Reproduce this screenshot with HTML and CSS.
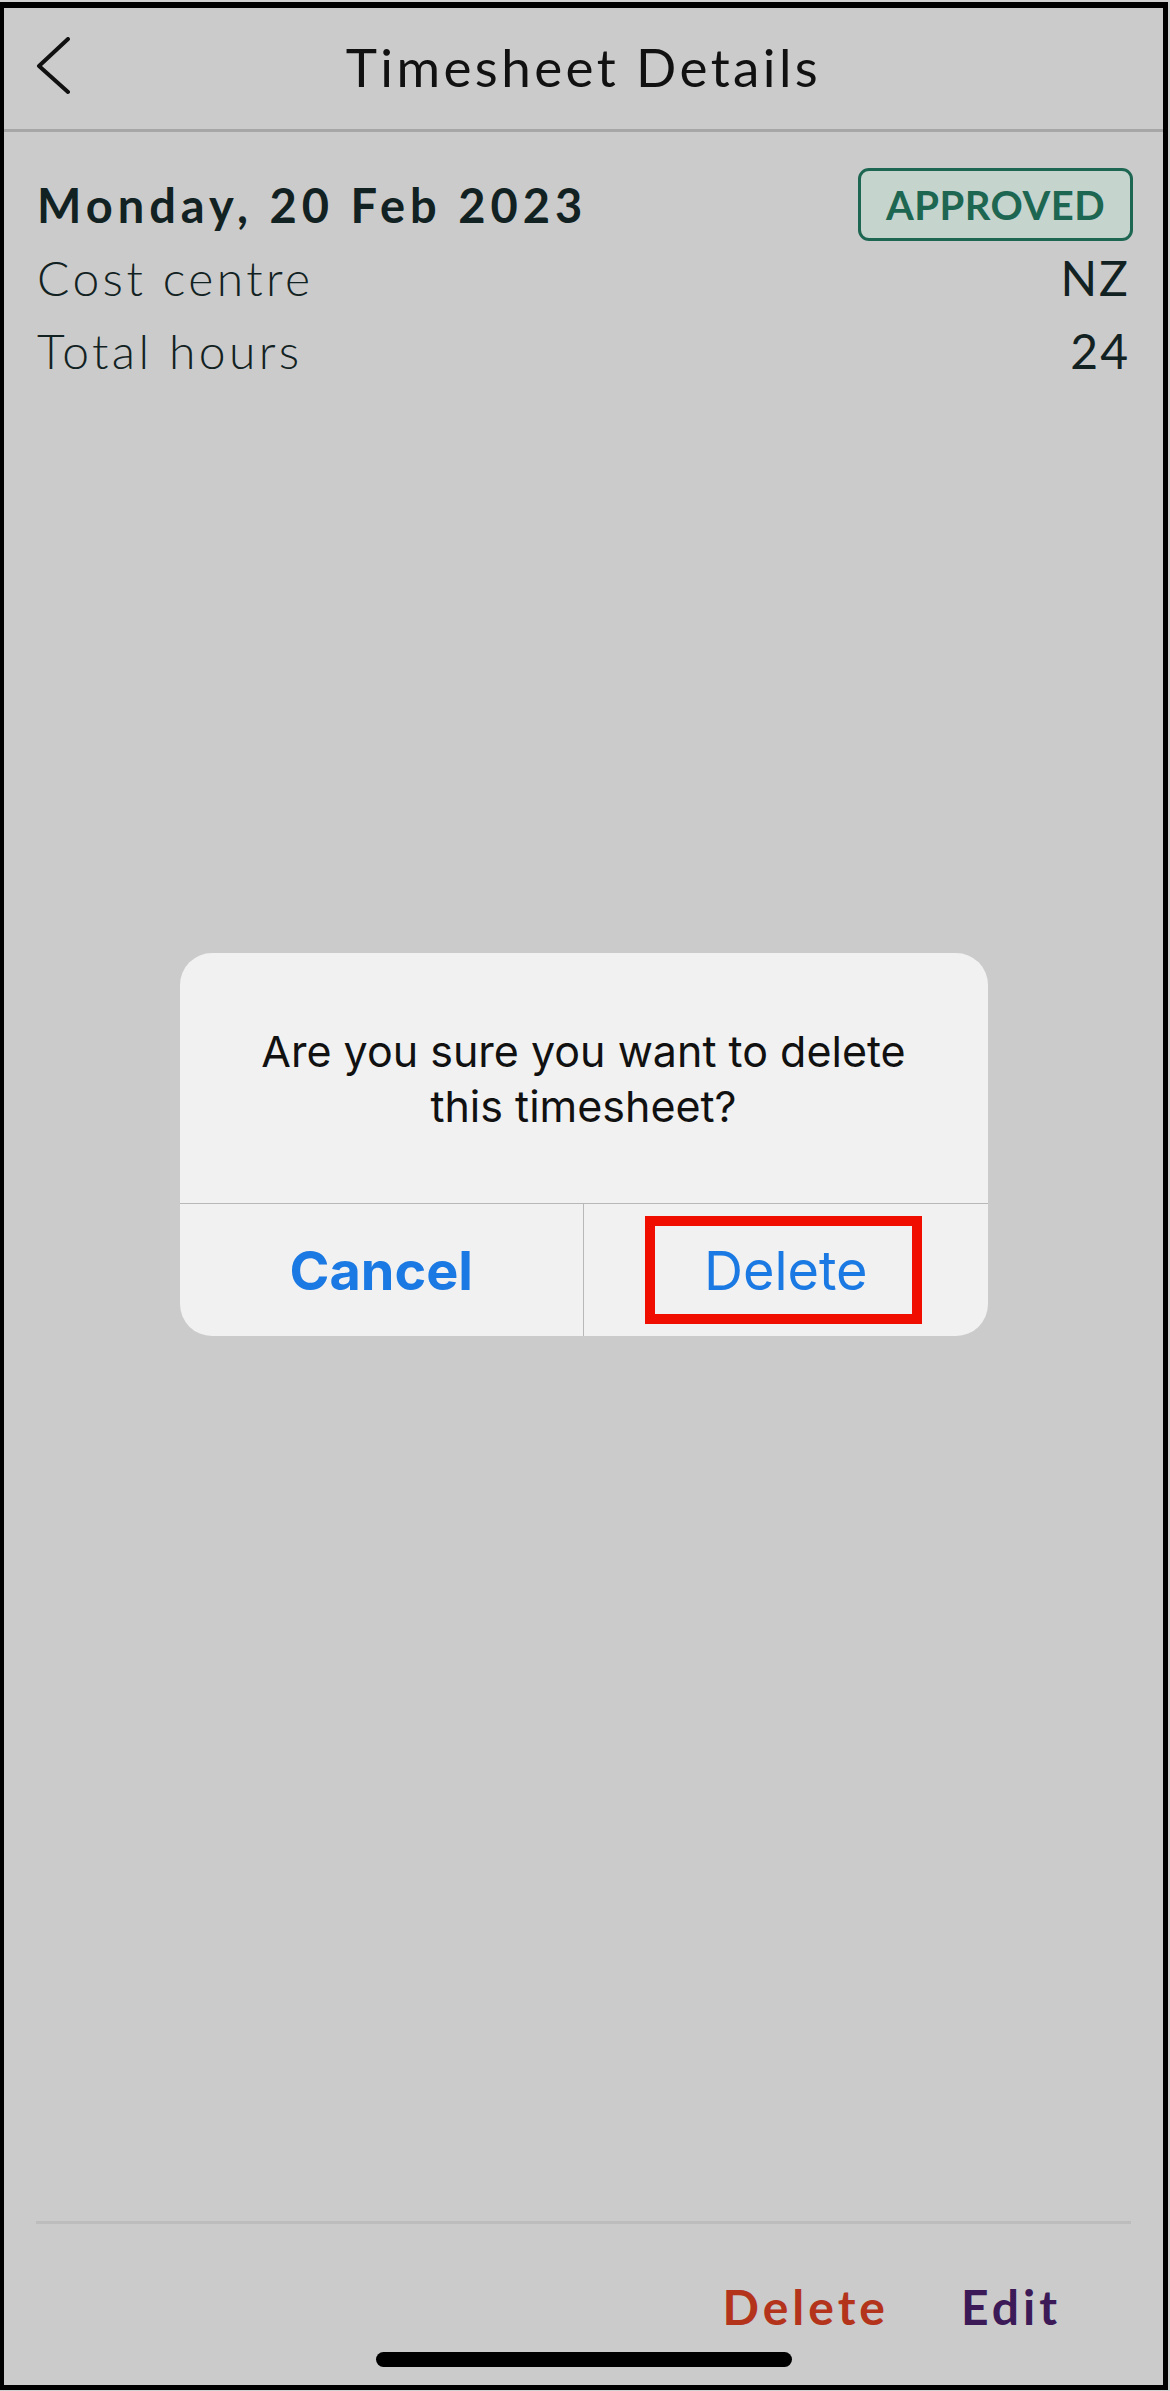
FILE: index.html
```html
<!DOCTYPE html>
<html lang="en">

<head>
    <meta charset="UTF-8">
    <meta name="viewport" content="width=device-width, initial-scale=1.0">
    <title>Timesheet Details</title>
    <link rel="stylesheet" href="styles.css">
</head>

<body>
    <div class="phone">
        <div class="header">
            <button class="back-btn" aria-label="Back">
                <svg width="40" height="60" viewBox="0 0 40 60">
                    <polyline points="34,2 5,29 34,55" fill="none" stroke="#111" stroke-width="4" stroke-linecap="round" stroke-linejoin="round" />
                </svg>
            </button>
            <h1>Timesheet Details</h1>
        </div>

        <div class="summary">
            <div class="row">
                <span class="date">Monday, 20 Feb 2023</span>
                <span class="badge">APPROVED</span>
            </div>
            <div class="row">
                <span class="label">Cost centre</span>
                <span class="value">NZ</span>
            </div>
            <div class="row">
                <span class="label">Total hours</span>
                <span class="value">24</span>
            </div>
        </div>

        <div class="spacer"></div>

        <div class="footer">
            <div class="actions">
                <button class="action delete">Delete</button>
                <button class="action edit">Edit</button>
            </div>
            <div class="home-bar"></div>
        </div>

        <!-- confirm dialog sits over the dimmed page -->
        <div class="overlay">
            <div class="dialog">
                <p class="dialog-msg">Are you sure you want to delete this timesheet?</p>
                <div class="dialog-buttons">
                    <button class="dialog-btn cancel">Cancel</button>
                    <button class="dialog-btn confirm">Delete</button>
                </div>
                <div class="highlight"></div>
            </div>
        </div>
    </div>
</body>

</html>
```

FILE: styles.css
```css
body {
    font-family: Lato, 'Noto Sans', sans-serif;
    margin: 0;
    background-color: #d0d0d0;
    color: #122222;
}

button {
    font-family: inherit;
    background: none;
    border: none;
    padding: 0;
    cursor: pointer;
}

.phone {
    position: relative;
    display: flex;
    flex-direction: column;
    height: 2388px;
    box-sizing: border-box;
    margin: 2px 2px 1px 0;
    border-style: solid;
    border-color: #000;
    border-width: 6px 5px 5px 4px;
    background-color: #cbcbcb;
}

.header {
    position: relative;
    display: flex;
    align-items: center;
    justify-content: center;
    height: 124px;
    box-sizing: border-box;
    padding-bottom: 5px;
    border-bottom: 3px solid #a6a6a6;
}

.header h1 {
    margin: 0;
    font-size: 53px;
    font-weight: 400;
    letter-spacing: 3.4px;
    color: #111;
}

.back-btn {
    position: absolute;
    left: 30px;
    top: 29px;
    display: flex;
}

.summary {
    padding: 36px 30px 0 33px;
}

.row {
    display: flex;
    justify-content: space-between;
    align-items: center;
    height: 73px;
}

.date {
    font-size: 47px;
    font-weight: 700;
    letter-spacing: 5px;
}

.badge {
    display: flex;
    align-items: center;
    justify-content: center;
    box-sizing: border-box;
    width: 275px;
    height: 73px;
    border: 3px solid #1d6651;
    border-radius: 11px;
    background-color: #c6d4ce;
    color: #1d6651;
    font-size: 40px;
    font-weight: 700;
    letter-spacing: 0.5px;
}

.label {
    font-size: 48px;
    font-weight: 300;
    letter-spacing: 3.4px;
}

.value {
    font-size: 48px;
    font-weight: 400;
    letter-spacing: 2px;
    margin-right: 3px;
}

.spacer {
    flex: 1;
}

.footer {
    margin: 0 32px;
    border-top: 3px solid #bdbdbd;
}

.actions {
    display: flex;
    justify-content: flex-end;
    gap: 72px;
    padding: 47px 70px 0 0;
    height: 72px;
}

.action {
    font-size: 48px;
    font-weight: 700;
    line-height: 72px;
    letter-spacing: 4px;
}

.action.delete {
    color: #b4331b;
}

.action.edit {
    color: #3b1a57;
}

.home-bar {
    width: 416px;
    height: 15px;
    margin: 9px auto 18px;
    border-radius: 8px;
    background-color: #000;
}

.overlay {
    position: absolute;
    inset: 0;
    display: flex;
    justify-content: center;
    align-items: flex-start;
    padding-top: 945px;
}

.dialog {
    position: relative;
    width: 808px;
    background-color: #f1f1f1;
    border-radius: 32px;
    overflow: hidden;
    font-family: Inter, 'Liberation Sans', sans-serif;
}

.dialog-msg {
    margin: 0;
    padding: 71px 60px 69px;
    border-bottom: 1px solid #b8b8b8;
    text-align: center;
    font-size: 43px;
    line-height: 55px;
    color: #111;
}

.dialog-buttons {
    display: flex;
    height: 132px;
}

.dialog-btn {
    flex: 1;
    font-size: 54px;
    color: #1a79e3;
}

.dialog-btn.cancel {
    font-weight: 700;
    border-right: 1px solid #b8b8b8;
}

/* red callout box over the Delete button */
.highlight {
    position: absolute;
    left: 465px;
    top: 263px;
    width: 277px;
    height: 108px;
    box-sizing: border-box;
    border: 10px solid #f00e00;
}
```
